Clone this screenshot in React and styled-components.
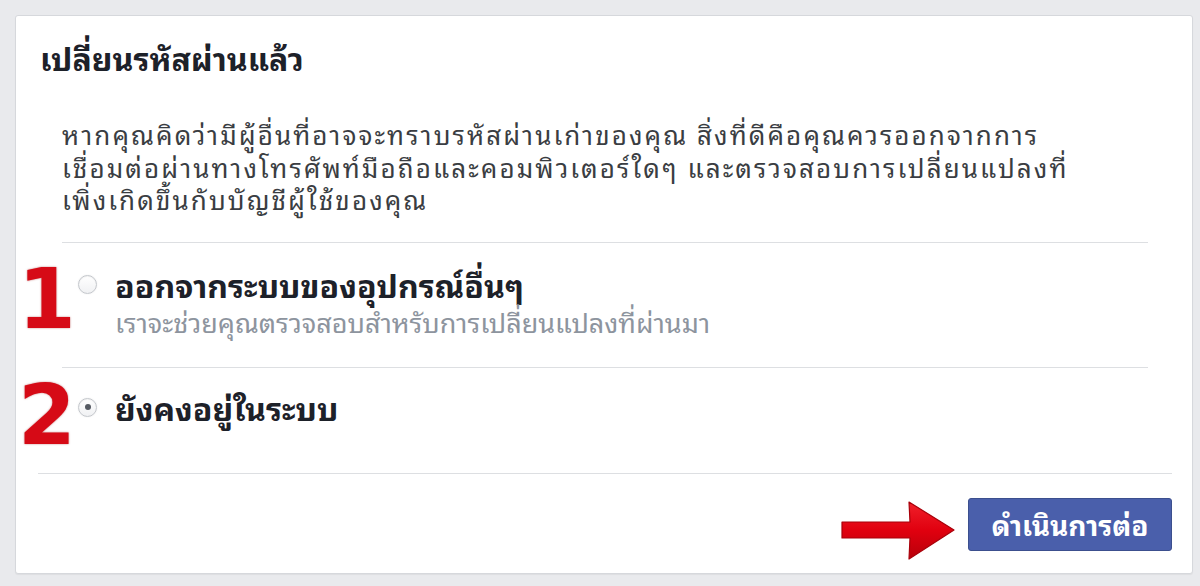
import React from "react";
import styled, { createGlobalStyle } from "styled-components";

const GlobalStyle = createGlobalStyle`
  html, body {
    margin: 0;
    padding: 0;
    background: #e9eaed;
  }
  body {
    font-family: "Noto Sans Thai Looped", "Noto Sans Thai", "Noto Sans", sans-serif;
  }
`;

const Page = styled.div`
  width: 1200px;
  height: 586px;
  box-sizing: border-box;
  padding: 15px 7px 12px 15px;
`;

const Card = styled.section`
  height: 100%;
  box-sizing: border-box;
  background: #fff;
  border: 1px solid #d6d8dc;
  border-radius: 3px;
  box-shadow: 0 1px 1px rgba(0, 0, 0, 0.05);
  display: flex;
  flex-direction: column;
`;

const Title = styled.h2`
  margin: 0;
  padding: 21px 0 0 24px;
  font-size: 32px;
  line-height: 40px;
  font-weight: bold;
  color: #1d2129;
`;

const Intro = styled.p`
  margin: 40px 44px 27px 46px;
  font-size: 26px;
  line-height: 32.5px;
  letter-spacing: 2.1px;
  color: #3a3d42;
  white-space: nowrap;
`;

const OptionList = styled.div`
  margin: 0 44px 0 46px;
  display: flex;
  flex-direction: column;
`;

const OptionRow = styled.label`
  position: relative;
  display: flex;
  align-items: flex-start;
  border-top: 1px solid #dddfe2;
  padding: ${(p) => p.$top}px 0 ${(p) => p.$bottom}px 16px;
`;

const Marker = styled.span`
  position: absolute;
  left: -44px;
  top: ${(p) => p.$top}px;
  font-family: "DejaVu Sans", sans-serif;
  font-weight: bold;
  font-size: 83px;
  line-height: 1;
  color: #d60a16;
  text-shadow: 0 0 2px rgba(140, 0, 0, 0.55);
`;

const Radio = styled.span`
  flex: none;
  width: 19px;
  height: 19px;
  box-sizing: border-box;
  margin-top: 9px;
  border-radius: 50%;
  border: 1px solid #c4c7cc;
  background: linear-gradient(#ffffff, #f0f1f3);
  box-shadow: 0 0 2px rgba(0, 0, 0, 0.08), inset 0 1px 1px rgba(0, 0, 0, 0.05);
  display: flex;
  align-items: center;
  justify-content: center;

  &::after {
    content: "";
    width: 6px;
    height: 6px;
    border-radius: 50%;
    background: ${(p) => (p.$checked ? "#555a62" : "transparent")};
  }
`;

const OptionText = styled.div`
  margin-left: 18px;
  display: flex;
  flex-direction: column;
  gap: 4px;
`;

const OptionLabel = styled.span`
  font-size: 32px;
  line-height: 36px;
  font-weight: bold;
  color: #1d2129;
`;

const OptionHint = styled.span`
  font-size: 27px;
  line-height: 30px;
  color: #8d949e;
`;

const Footer = styled.div`
  margin: 0 20px 0 22px;
  border-top: 1px solid #dddfe2;
  padding: 24px 0 23px;
  display: flex;
  justify-content: flex-end;
  align-items: flex-start;
  gap: 12px;
`;

const Arrow = styled.svg`
  width: 115px;
  height: 62px;
  display: block;
  margin: 2px 0 -12px;
`;

const Button = styled.button`
  width: 204px;
  height: 53px;
  box-sizing: border-box;
  border: 1px solid #3c4f8e;
  border-radius: 3px;
  background: #4a5fab;
  color: #fff;
  font-family: inherit;
  font-size: 28px;
  line-height: 1;
  font-weight: bold;
  cursor: pointer;
`;

export default function App() {
  return (
    <>
      <GlobalStyle />
      <Page>
        <Card>
          <Title>เปลี่ยนรหัสผ่านแล้ว</Title>
          <Intro>
            หากคุณคิดว่ามีผู้อื่นที่อาจจะทราบรหัสผ่านเก่าของคุณ สิ่งที่ดีคือคุณควรออกจากการ
            <br />
            เชื่อมต่อผ่านทางโทรศัพท์มือถือและคอมพิวเตอร์ใดๆ และตรวจสอบการเปลี่ยนแปลงที่
            <br />
            เพิ่งเกิดขึ้นกับบัญชีผู้ใช้ของคุณ
          </Intro>
          <OptionList>
            <OptionRow $top={23} $bottom={31}>
              <Marker $top={15}>1</Marker>
              <Radio />
              <OptionText>
                <OptionLabel>ออกจากระบบของอุปกรณ์อื่นๆ</OptionLabel>
                <OptionHint>เราจะช่วยคุณตรวจสอบสำหรับการเปลี่ยนแปลงที่ผ่านมา</OptionHint>
              </OptionText>
            </OptionRow>
            <OptionRow $top={21} $bottom={48}>
              <Marker $top={6}>2</Marker>
              <Radio $checked />
              <OptionText>
                <OptionLabel>ยังคงอยู่ในระบบ</OptionLabel>
              </OptionText>
            </OptionRow>
          </OptionList>
          <Footer>
            <Arrow viewBox="0 0 115 62">
              <defs>
                <linearGradient id="arrowFill" x1="0" y1="0" x2="0" y2="1">
                  <stop offset="0" stopColor="#f0202a" />
                  <stop offset="0.5" stopColor="#e0000f" />
                  <stop offset="1" stopColor="#b8000a" />
                </linearGradient>
              </defs>
              <path
                d="M1 22 L69 22 L68 2 L113 30 L68 59 L69 38 L1 38 Z"
                fill="url(#arrowFill)"
                stroke="#a8000a"
                strokeWidth="1.2"
                strokeLinejoin="round"
              />
            </Arrow>
            <Button type="button">ดำเนินการต่อ</Button>
          </Footer>
        </Card>
      </Page>
    </>
  );
}
